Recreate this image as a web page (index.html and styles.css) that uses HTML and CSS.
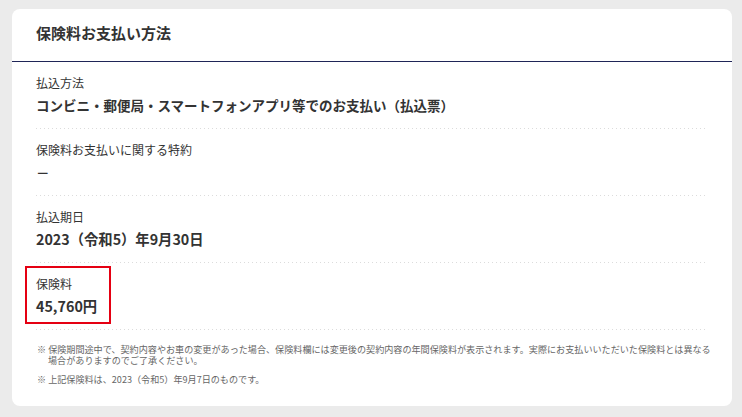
FILE: index.html
```html
<!DOCTYPE html>
<html lang="ja">
<head>
  <meta charset="UTF-8">
  <meta name="viewport" content="width=device-width, initial-scale=1.0">
  <title>保険料お支払い方法</title>
  <link rel="stylesheet" href="styles.css">
</head>
<body>
  <div class="card">
    <div class="card-header">
      <h2>保険料お支払い方法</h2>
    </div>

    <div class="card-body">
      <div class="item">
        <div class="label">払込方法</div>
        <div class="value value-text">コンビニ・郵便局・スマートフォンアプリ等でのお支払い（払込票）</div>
      </div>

      <div class="item">
        <div class="label">保険料お支払いに関する特約</div>
        <div class="value value-text">－</div>
      </div>

      <div class="item">
        <div class="label">払込期日</div>
        <div class="value">2023（令和5）年9月30日</div>
      </div>

      <div class="item">
        <div class="highlight">
          <div class="label">保険料</div>
          <div class="value">45,760円</div>
        </div>
      </div>

      <div class="notes">
        <p class="note">※ 保険期間途中で、契約内容やお車の変更があった場合、保険料欄には変更後の契約内容の年間保険料が表示されます。実際にお支払いいただいた保険料とは異なる場合がありますのでご了承ください。</p>
        <p class="note">※ 上記保険料は、2023（令和5）年9月7日のものです。</p>
      </div>
    </div>
  </div>
</body>
</html>
```

FILE: styles.css
```css
body {
  font-family: "Noto Sans CJK JP", "Noto Sans", sans-serif;
  background-color: #ebebeb;
  color: #333;
  margin: 0;
  padding: 9px 10px 0 12px;
}

.card {
  background-color: white;
  border-radius: 8px;
  width: 720px;
  height: 397px;
}

.card-header {
  height: 52px;
  padding: 0 24px;
  border-bottom: 1px solid #1f2557;
  display: flex;
  align-items: center;
}

.card-header h2 {
  margin: 0;
  font-size: 15px;
  font-weight: bold;
  line-height: 20px;
  margin-top: -4px;
}

.card-body {
  padding: 0 24px 0 24px;
}

.item {
  padding: 12px 0 13px;
  background-image: linear-gradient(to right, #dcdcdc 1px, transparent 1px);
  background-size: 4px 1px;
  background-repeat: repeat-x;
  background-position: 0 100%;
  width: 670px;
}

.label {
  font-size: 12px;
  line-height: 18px;
}

.value {
  font-size: 14.3px;
  font-weight: bold;
  line-height: 22px;
  margin-top: 2px;
}

.value-text {
  font-size: 13.5px;
}

.highlight {
  display: inline-block;
  position: relative;
}

.highlight::after {
  content: "";
  position: absolute;
  top: -9px;
  bottom: -7px;
  left: -11px;
  right: -14px;
  border: 2px solid #e50012;
}

.notes {
  padding-top: 14px;
}

.note {
  margin: 0 0 8px;
  font-size: 9.1px;
  line-height: 11px;
  color: #666;
  padding-left: 12px;
  text-indent: -11px;
  width: 664px;
}
```
